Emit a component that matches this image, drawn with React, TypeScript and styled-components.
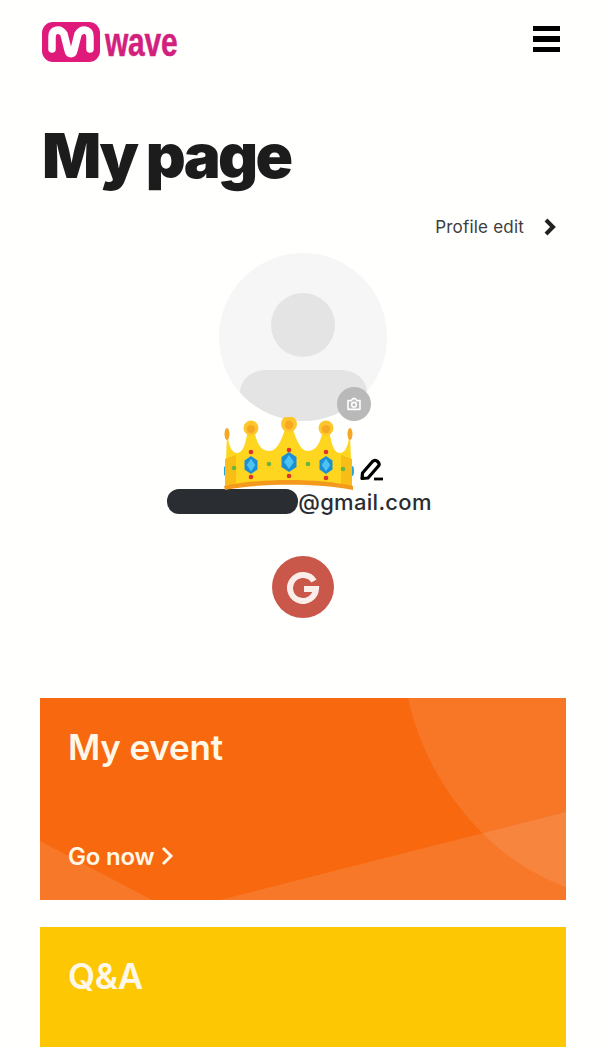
import styled, { createGlobalStyle } from "styled-components";

const GlobalStyle = createGlobalStyle`
  html, body {
    margin: 0;
    padding: 0;
    background: #fffffe;
    font-family: Inter, "Noto Sans", sans-serif;
  }
`;

const Page = styled.div`
  width: 606px;
  height: 1047px;
  overflow: hidden;
  box-sizing: border-box;
  padding: 22px 40px 0;
`;

const Header = styled.header`
  display: flex;
  justify-content: space-between;
  align-items: flex-start;
  height: 40px;
  padding: 0 6px 0 2px;
`;

const Logo = styled.div`
  display: flex;
  align-items: center;
  gap: 5px;
`;

const LogoWord = styled.span`
  display: inline-block;
  width: 72px;
  font-family: "Liberation Sans", sans-serif;
  font-weight: 700;
  font-size: 40px;
  line-height: 40px;
  color: #d31f7d;
  -webkit-text-stroke: 0.5px #d31f7d;
  transform: scaleX(0.75);
  transform-origin: left center;
  letter-spacing: -0.3px;
  white-space: nowrap;
`;

const Burger = styled.div`
  display: flex;
  flex-direction: column;
  gap: 5px;
  margin-top: 4px;
`;

const BurgerBar = styled.span`
  display: block;
  width: 27px;
  height: 5.4px;
  background: #000;
`;

const Title = styled.h1`
  margin: 56px 0 0 2px;
  font-size: 62px;
  line-height: 76px;
  font-weight: 900;
  letter-spacing: -2.7px;
  color: #1c1c1c;
`;

const EditRow = styled.div`
  display: flex;
  justify-content: flex-end;
  align-items: center;
  gap: 20px;
  margin-top: 21px;
  padding-right: 10px;
  height: 24px;
  font-size: 17px;
  letter-spacing: 0.2px;
  color: #3d3d3d;
`;

const Profile = styled.section`
  display: flex;
  flex-direction: column;
  align-items: center;
  margin-top: 14px;
`;

const Avatar = styled.div`
  position: relative;
  width: 168px;
  height: 168px;
`;

const AvatarDisc = styled.div`
  width: 100%;
  height: 100%;
  border-radius: 50%;
  background: #f6f6f6;
  overflow: hidden;
  display: flex;
  flex-direction: column;
  align-items: center;
`;

const AvatarHead = styled.div`
  width: 64px;
  height: 64px;
  margin-top: 40px;
  flex: none;
  border-radius: 50%;
  background: #e4e4e4;
`;

const AvatarBody = styled.div`
  width: 127px;
  height: 64px;
  margin-top: 13px;
  flex: none;
  border-radius: 32px 32px 64px 64px / 28px 28px 52px 52px;
  background: #e4e4e4;
`;

const CameraBadge = styled.div`
  position: absolute;
  right: 16px;
  bottom: 0;
  width: 34px;
  height: 34px;
  border-radius: 50%;
  background: #b9b9b9;
  display: flex;
  align-items: center;
  justify-content: center;
`;

const NameRow = styled.div`
  position: relative;
  height: 68px;
  width: 168px;
`;

const CrownOverlay = styled.svg`
  position: absolute;
  left: 5px;
  top: -4px;
  width: 130px;
  height: 75px;
`;

const PencilOverlay = styled.svg`
  position: absolute;
  left: 141px;
  top: 37px;
  width: 23px;
  height: 23px;
`;

const EmailRow = styled.div`
  display: flex;
  align-items: center;
  height: 25px;
  margin-right: 7px;
  font-size: 22px;
  font-weight: 500;
  letter-spacing: 0.3px;
  color: #2a2d31;
`;

const Redacted = styled.span`
  display: block;
  width: 131px;
  height: 25px;
  border-radius: 12px;
  background: #2a2e33;
`;

const GoogleBadge = styled.div`
  width: 62px;
  height: 62px;
  margin-top: 42px;
  border-radius: 50%;
  background: #c9584a;
  display: flex;
  align-items: center;
  justify-content: center;
`;

const Cards = styled.div`
  display: flex;
  flex-direction: column;
  gap: 27px;
  margin-top: 80px;
`;

const Card = styled.article<{ $bg: string }>`
  position: relative;
  flex: none;
  height: 202px;
  box-sizing: border-box;
  padding: 27px 28px 0;
  overflow: hidden;
  background: ${(p) => p.$bg};
  color: #fff8e8;
`;

const CardArt = styled.svg`
  position: absolute;
  inset: 0;
  width: 100%;
  height: 100%;
`;

const CardTitle = styled.h2`
  position: relative;
  margin: 0;
  font-size: 35px;
  line-height: 44px;
  font-weight: 600;
  letter-spacing: -0.2px;
`;

const CardLink = styled.div`
  position: relative;
  display: flex;
  align-items: center;
  gap: 6px;
  margin-top: 72px;
  height: 30px;
  font-size: 24px;
  font-weight: 600;
  letter-spacing: -0.2px;
`;

const Crown = () => (
  <CrownOverlay viewBox="0 0 130 75">
    <ellipse cx="1.5" cy="54" rx="2" ry="5" fill="#2aa3dc" />
    <ellipse cx="128" cy="54" rx="2" ry="5" fill="#2aa3dc" />
    <path
      d="M1 71 L3 16 C5 30 8 36 13 36 C20 36 22 24 24 12 L30 12 C32 24 36 34 45 34 C54 34 59 20 62 8 L68 8 C71 20 76 34 84 34 C93 34 97 24 99 12 L105 12 C107 24 109 36 116 36 C121 36 124 30 126 16 L128 71 C95 63 35 63 1 71 Z"
      fill="#fed61f"
    />
    <path d="M1 42 L12 38 L12 67 L1 71 Z" fill="#f8bd17" />
    <path d="M128 42 L117 38 L117 67 L128 71 Z" fill="#f8bd17" />
    <path d="M0 69 C35 61 95 61 129 69 L129 73 C95 66 35 66 1 73 Z" fill="#f39a1d" />
    <ellipse cx="3" cy="17" rx="2.5" ry="6" fill="#f5a623" />
    <ellipse cx="126" cy="17" rx="2.5" ry="6" fill="#f5a623" />
    {[
      [27, 11, 7.5],
      [65, 7, 8],
      [102, 11, 7.5],
    ].map(([x, y, r]) => (
      <g key={x}>
        <circle cx={x} cy={y} r={r} fill="#fdc72c" />
        <circle cx={x} cy={y + 1} r={r * 0.55} fill="#f7a823" />
      </g>
    ))}
    {[
      [27, 48, 6.5, 9],
      [65, 45, 7.5, 10],
      [102, 48, 6.5, 9],
    ].map(([x, y, w, h]) => (
      <g key={x}>
        <path
          d={`M${x} ${y - h} L${x + w} ${y - h / 2} L${x + w} ${y + h / 2} L${x} ${y + h} L${x - w} ${y + h / 2} L${x - w} ${y - h / 2} Z`}
          fill="#1a8fd6"
        />
        <path d={`M${x} ${y - h * 0.7} L${x + w * 0.65} ${y} L${x} ${y + h * 0.7} L${x - w * 0.65} ${y} Z`} fill="#4cc3f1" />
      </g>
    ))}
    {[
      [27, 35],
      [65, 33],
      [102, 35],
      [27, 60],
      [65, 59],
      [102, 61],
    ].map(([x, y]) => (
      <circle key={`${x}-${y}`} cx={x} cy={y} r="2.3" fill="#e0322b" />
    ))}
    {[
      [10, 51],
      [45, 47],
      [84, 47],
      [119, 52],
    ].map(([x, y]) => (
      <circle key={x} cx={x} cy={y} r="2.3" fill="#6cb33f" />
    ))}
  </CrownOverlay>
);

export default function App() {
  return (
    <Page>
      <GlobalStyle />
      <Header>
        <Logo>
          <svg width="58" height="40" viewBox="0 0 58 40">
            <rect width="58" height="40" rx="11" fill="#df1a7b" />
            <path
              d="M10 27 V15 C10 7 18 6 22 12 L26 28 C27 33 31 33 32 28 L36 12 C40 6 48 7 48 15 V27"
              fill="none"
              stroke="#fff"
              strokeWidth="7.5"
              strokeLinecap="round"
            />
          </svg>
          <LogoWord>wave</LogoWord>
        </Logo>
        <Burger>
          <BurgerBar />
          <BurgerBar />
          <BurgerBar />
        </Burger>
      </Header>

      <Title>My page</Title>

      <EditRow>
        <span>Profile edit</span>
        <svg width="12" height="18" viewBox="0 0 12 18">
          <path d="M2 2 L9 9 L2 16" fill="none" stroke="#222" strokeWidth="4" />
        </svg>
      </EditRow>

      <Profile>
        <Avatar>
          <AvatarDisc>
            <AvatarHead />
            <AvatarBody />
          </AvatarDisc>
          <CameraBadge>
            <svg width="16" height="16" viewBox="0 0 24 24" fill="none" stroke="#fff" strokeWidth="2.4" strokeLinejoin="round">
              <path d="M3 7 H8 L10 4 H14 L16 7 H21 V20 H3 Z" />
              <circle cx="12" cy="13" r="3.5" />
            </svg>
          </CameraBadge>
        </Avatar>
        <NameRow>
          <Crown />
          <PencilOverlay viewBox="0 0 23 23">
            <path
              d="M2 20.5 L2.5 15 L12.5 3.5 C14 2 15.5 2 17 3 L18 4 C19.5 5.5 19.5 7 18 8.5 L8 20 Z"
              fill="none"
              stroke="#000"
              strokeWidth="3.2"
              strokeLinejoin="round"
            />
            <path d="M14 21 H23" stroke="#000" strokeWidth="2.8" />
          </PencilOverlay>
        </NameRow>
        <EmailRow>
          <Redacted />
          <span>@gmail.com</span>
        </EmailRow>
        <GoogleBadge>
          <svg width="34" height="34" viewBox="0 0 34 34">
            <path
              d="M28 11 A13 13 0 1 0 30 19 H18"
              fill="none"
              stroke="#fbeeea"
              strokeWidth="6"
            />
          </svg>
        </GoogleBadge>
      </Profile>

      <Cards>
        <Card $bg="#f7680f">
          <CardArt viewBox="0 0 526 202">
            <path d="M368 0 C385 80 445 160 526 189 V0 Z" fill="#fff" fillOpacity="0.1" />
            <path d="M180 202 L526 114 V202 Z" fill="#fff" fillOpacity="0.11" />
            <path d="M0 143 L112 202 H0 Z" fill="#fff" fillOpacity="0.11" />
          </CardArt>
          <CardTitle>My event</CardTitle>
          <CardLink>
            Go now
            <svg width="13" height="20" viewBox="0 0 13 20">
              <path d="M2 2 L10 10 L2 18" fill="none" stroke="#fff8e8" strokeWidth="3" />
            </svg>
          </CardLink>
        </Card>
        <Card $bg="#fec703">
          <CardTitle>Q&amp;A</CardTitle>
        </Card>
      </Cards>
    </Page>
  );
}
